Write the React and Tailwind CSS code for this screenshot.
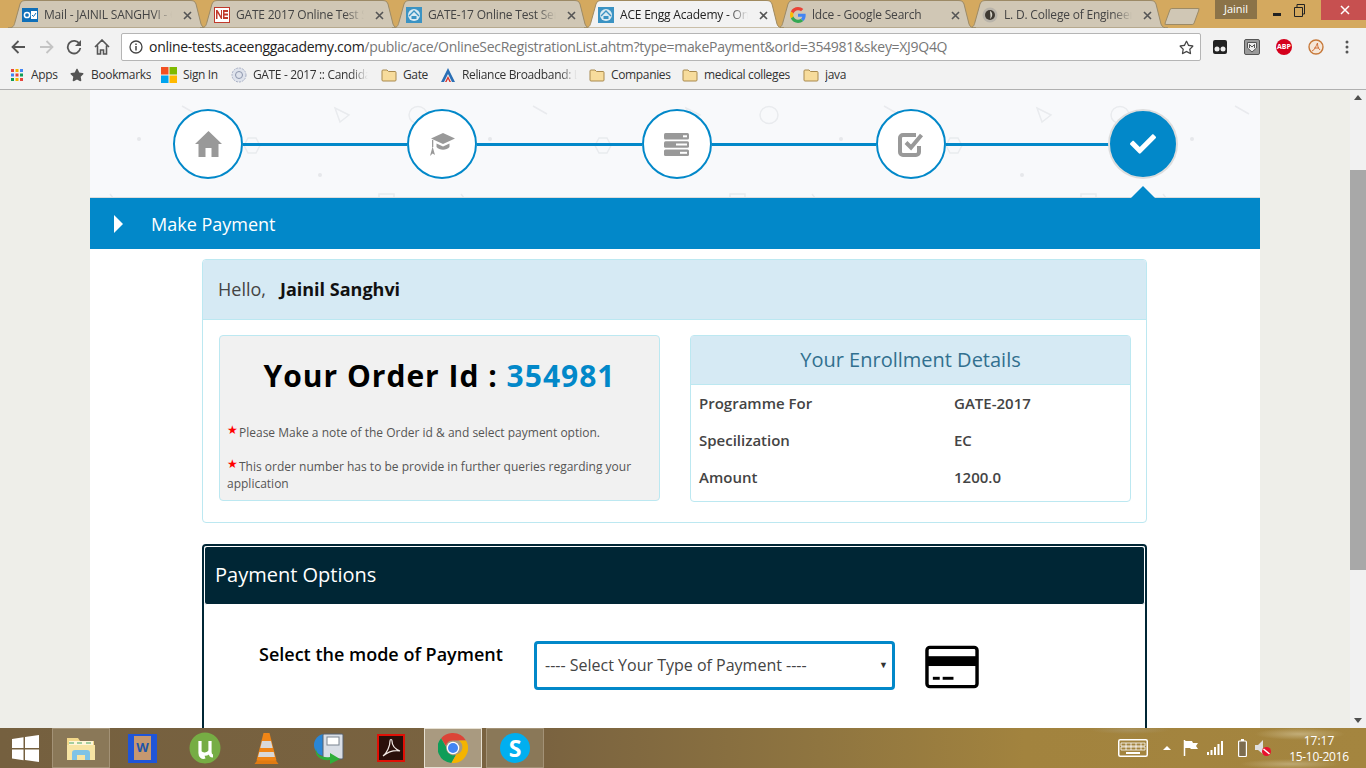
import React from 'react';
import { FaStar, FaRegStar, FaCheck } from 'react-icons/fa';

const OutlookIcon = () => (
  <svg width="16" height="16" viewBox="0 0 16 16"><rect x="0" y="1" width="16" height="14" fill="#0f6fb8" /><rect x="9" y="4" width="6" height="8" fill="#fff" /><path d="M10 8l1.5 1.5L14 6" stroke="#0f6fb8" fill="none" /><circle cx="5" cy="8" r="2.6" fill="none" stroke="#fff" strokeWidth="1.5" /></svg>
);
const NeIcon = () => (
  <svg width="16" height="16" viewBox="0 0 16 16"><rect x="0.5" y="0.5" width="15" height="15" fill="#fff" stroke="#c0392b" /><path d="M2 12V3h1.5L7 9V3h1v9H7L3.5 6v6z" fill="#c0392b" /><path d="M9 3h5v2H10.5v1.5H14v2h-3.5V10H14v2H9z" fill="#c0392b" /></svg>
);
const AceIcon = ({ s = 16 }) => (
  <svg width={s} height={s} viewBox="0 0 16 16"><rect width="16" height="16" fill="#3b93c3" /><circle cx="8" cy="8" r="6" fill="#dbeaf2" /><path d="M3 9l5-5 5 5" fill="none" stroke="#3b93c3" strokeWidth="1.4" /><rect x="5.5" y="9" width="5" height="3" fill="#3b93c3" /></svg>
);
const GoogleIcon = () => (
  <svg width="16" height="16" viewBox="0 0 48 48"><path fill="#EA4335" d="M24 9.5c3.5 0 6.6 1.2 9.1 3.6l6.8-6.8C35.8 2.4 30.4 0 24 0 14.6 0 6.5 5.4 2.6 13.2l7.9 6.1C12.400 13.600 17.700 9.500 24 9.500z" /><path fill="#4285F4" d="M47 24.500c0-1.600-.1-3.100-.4-4.500H24v9h13c-.6 3-2.300 5.500-4.800 7.200l7.700 6c4.500-4.200 7.100-10.300 7.100-17.700z" /><path fill="#FBBC05" d="M10.500 28.700c-.5-1.500-.8-3-.8-4.700s.3-3.200.8-4.700l-7.900-6.100C.9 16.500 0 20.100 0 24s.9 7.500 2.600 10.800z" /><path fill="#34A853" d="M24 48c6.500 0 11.900-2.100 15.900-5.800l-7.700-6c-2.200 1.500-4.900 2.300-8.200 2.300-6.300 0-11.600-4.100-13.500-9.800l-7.900 6.100C6.500 42.600 14.600 48 24 48z" /></svg>
);
const LdIcon = () => (
  <svg width="16" height="16" viewBox="0 0 16 16"><circle cx="8" cy="8" r="7.500" fill="#b9b4aa" /><circle cx="8" cy="8" r="5" fill="#3f3a33" /><path d="M8 4c3 1 3 6 0 8 1-3 0-5 0-8z" fill="#d8d4c8" /></svg>
);
const Folder = () => (
  <svg width="16" height="14" viewBox="0 0 16 14"><path d="M1 3a1 1 0 0 1 1-1h4l1.500 1.500H14a1 1 0 0 1 1 1V12a1 1 0 0 1-1 1H2a1 1 0 0 1-1-1z" fill="#f7dc9c" stroke="#a98a4e" /></svg>
);

const Tab = ({ icon, title, active, z }) => (
  <div className={`relative flex h-[28px] w-[200px] shrink-0 items-center pl-[14px] pt-[2px] ${z} ${active ? 'text-[#222]' : 'text-[#444]'} -mr-[8px]`}>
    <svg className="absolute inset-0" width="200" height="28" viewBox="0 0 200 28">
      <path d="M0 28C5 28 6 26 7 22L12 4C13 1 15 0.500 18 0.500H182C185 0.500 187 1 188 4L193 24C194 27 196 28 200 28Z" fill={active ? '#f2f2f2' : '#d0c7b5'} stroke={active ? '#a08a5f' : '#9c8a66'} strokeWidth="1" />
    </svg>
    <span className="relative w-[16px] shrink-0">{icon}</span>
    <span className="relative ml-[6px] w-[128px] overflow-hidden whitespace-nowrap text-[12px] leading-[16px] tracking-[-0.2px] [mask-image:linear-gradient(to_right,black_85%,transparent)]">{title}</span>
    <svg className="relative ml-[11px]" width="9" height="9" viewBox="0 0 9 9"><path d="M1 1l7 7M8 1l-7 7" stroke="#555" strokeWidth="1.600" /></svg>
  </div>
);

const Bookmark = ({ icon, label, w, fade }) => (
  <div className="flex h-[28px] shrink-0 items-center" style={{ width: w }}>
    <span className="flex w-[16px] shrink-0 justify-center">{icon}</span>
    <span className={`ml-[6px] overflow-hidden whitespace-nowrap text-[12px] leading-[16px] tracking-[-0.35px] text-[#333] ${fade ? 'w-[115px] [mask-image:linear-gradient(to_right,black_85%,transparent)]' : ''}`}>{label}</span>
  </div>
);

const Step = ({ children, last }) => (
  <div className={`relative z-10 flex shrink-0 items-center justify-center rounded-full border-2 ${last ? 'h-[66px] w-[66px] border-[#0288c9] bg-[#0288c9] text-white shadow-[0_0_0_2px_#dddddd]' : 'h-[70px] w-[70px] border-[#0288c9] bg-white text-[#999999]'}`}>
    {children}
    {last && <div className="absolute left-[19px] top-[73px] h-0 w-0 border-x-[12px] border-b-[12px] border-x-transparent border-b-[#0288c9]" />}
  </div>
);
const Line = () => <div className="h-[3px] flex-1 bg-[#0288c9]" />;

const HeroPattern = () => (
  <svg className="absolute inset-0" width="1170" height="107">
    <defs>
      <pattern id="tile" width="351" height="108" patternUnits="userSpaceOnUse">
        <g fill="none" stroke="#e9ebee" strokeWidth="1.500">
          <path d="M92 16l14 8" />
          <path d="M245 18l14 7-9 7z" />
          <ellipse cx="328" cy="25" rx="9" ry="8.500" />
          <path d="M158 48h8l4 7.500-4 7.500h-8l-4-7.500z" />
          <path d="M20 104l3 4" />
          <rect x="289" y="104" width="15" height="8" />
        </g>
        <circle cx="49" cy="49" r="2" fill="#e6e8eb" />
        <circle cx="230" cy="85" r="2" fill="#e6e8eb" />
      </pattern>
    </defs>
    <rect width="1170" height="107" fill="url(#tile)" />
  </svg>
);

const HomeIcon = () => (
  <svg width="27" height="26" viewBox="0 0 27 26" fill="#999999"><path d="M13.500 0L27 13h-3.500v13h-7V17h-6v9h-7V13H0z" /></svg>
);
const CapIcon = () => (
  <svg width="26" height="23" viewBox="0 0 26 23" fill="#999999">
    <path d="M14 0l12 5.500L14 11 2 5.500z" />
    <path d="M7.500 10.500L14 13.500l6.500-3V14c-3 3.500-10 3.500-13 0z" />
    <path d="M3 7h1.300v7H3z" />
    <path d="M3.600 13.500L6 22l-2.400-1.500L1 23z" />
  </svg>
);
const ServerIcon = () => (
  <svg width="25" height="23" viewBox="0 0 25 23">
    <rect width="25" height="6.500" y="0" rx="1.500" fill="#999999" />
    <rect width="25" height="6.500" y="8.200" rx="1.500" fill="#999999" />
    <rect width="25" height="6.500" y="16.500" rx="1.500" fill="#999999" />
    <rect x="19" y="2.300" width="4" height="2" fill="#fff" />
    <rect x="12" y="10.500" width="11" height="2" fill="#fff" />
    <rect x="16" y="18.800" width="7" height="2" fill="#fff" />
  </svg>
);
const CheckIcon = () => (
  <svg width="26" height="25" viewBox="0 0 26 25" fill="none" stroke="#999999">
    <path d="M21 14v6a3 3 0 0 1-3 3H5a3 3 0 0 1-3-3V6a3 3 0 0 1 3-3h13" strokeWidth="4" />
    <path d="M8 10.500l5 5L23.500 3" strokeWidth="4" />
  </svg>
);

const DetailRow = ({ k, v }) => (
  <div className="flex h-[37px] items-center text-[15px] font-semibold text-[#444]">
    <span className="w-[255px]">{k}</span>
    <span>{v}</span>
  </div>
);

const Star = () => <span className="relative -top-[3px] mr-[1px] text-[12px] leading-none text-[#ff0000]">★</span>;

const TaskBtn = ({ children, className }) => (
  <div className={`flex h-[40px] shrink-0 items-center justify-center ${className}`}>{children}</div>
);

export default function App() {
  return (
    <div className="flex h-[768px] w-[1366px] flex-col overflow-hidden font-['Open_Sans',sans-serif]">
      {/* tab strip */}
      <div className="relative flex h-[28px] shrink-0 bg-[#d4a95f] pl-[8px]">
        <Tab z="z-[1]" icon={<OutlookIcon />} title="Mail - JAINIL SANGHVI - Outlook" />
        <Tab z="z-[2]" icon={<NeIcon />} title="GATE 2017 Online Test Series" />
        <Tab z="z-[3]" icon={<AceIcon />} title="GATE-17 Online Test Series" />
        <Tab z="z-[6]" active icon={<AceIcon />} title="ACE Engg Academy - Online" />
        <Tab z="z-[4]" icon={<GoogleIcon />} title="ldce - Google Search" />
        <Tab z="z-[3]" icon={<LdIcon />} title="L. D. College of Engineering" />
        <div className="ml-[7px] mt-[8px] h-[17px] w-[30px] shrink-0 -skew-x-[20deg] rounded-[2px] border border-[#9c8a66] bg-[#d0c7b5]" />
        <div className="ml-[18px] flex h-[19px] w-[42px] shrink-0 items-center justify-center bg-[#8b7348] text-[11px] text-white">Jainil</div>
        <div className="ml-[16px] flex h-[20px] w-[48px] shrink-0 items-start">
          <div className="mt-[13px] h-[3px] w-[8px] bg-[#222]" />
          <svg className="ml-[13px] mt-[4px]" width="11" height="13" viewBox="0 0 11 13"><path d="M0.500 3.500h8v9h-8zM3 3V0.500h7.500V10H9" fill="none" stroke="#222" /></svg>
        </div>
        <div className="flex h-[20px] w-[48px] shrink-0 items-center justify-center bg-[#c75050]">
          <svg width="10" height="10" viewBox="0 0 10 10"><path d="M1 1l8 8M9 1l-8 8" stroke="#fff" strokeWidth="1.500" /></svg>
        </div>
      </div>

      {/* toolbar */}
      <div className="flex h-[33px] shrink-0 items-center bg-[#f2f2f2] pt-[5px]">
        <div className="flex w-[121px] shrink-0 items-center pl-[11px]">
          <svg width="15" height="14" viewBox="0 0 15 14"><path d="M14 7H2M7.500 1L1.500 7l6 6" fill="none" stroke="#555" strokeWidth="1.800" /></svg>
          <svg className="ml-[13px]" width="15" height="14" viewBox="0 0 15 14"><path d="M1 7h12M7.500 1l6 6-6 6" fill="none" stroke="#c4c4c4" strokeWidth="1.800" /></svg>
          <svg className="ml-[12px]" width="16" height="16" viewBox="0 0 16 16"><path d="M13.500 5A6.300 6.300 0 1 0 14.300 9" fill="none" stroke="#555" strokeWidth="1.800" /><path d="M15 1v6H9z" fill="#555" /></svg>
          <svg className="ml-[12px]" width="16" height="16" viewBox="0 0 16 16"><path d="M1 8l7-7 7 7M3.500 6.500V15h3v-4h3v4h3V6.500" fill="none" stroke="#555" strokeWidth="1.600" /></svg>
        </div>
        <div className="flex h-[28px] w-[1080px] shrink-0 items-center rounded-[2px] border border-[#b5b5b5] bg-white">
          <svg className="ml-[7px]" width="14" height="14" viewBox="0 0 14 14"><circle cx="7" cy="7" r="6" fill="none" stroke="#444" strokeWidth="1.300" /><path d="M7 6v4.500M7 3.500v1.500" stroke="#444" strokeWidth="1.500" /></svg>
          <span className="ml-[6px] whitespace-nowrap pb-[2px] text-[14px] tracking-[-0.29px] text-[#222]">online-tests.aceenggacademy.com<span className="text-[#777]">/public/ace/OnlineSecRegistrationList.ahtm?type=makePayment&amp;orId=354981&amp;skey=XJ9Q4Q</span></span>
          <FaRegStar className="ml-auto mr-[6px] text-[15px] text-[#444]" />
        </div>
        <div className="flex flex-1 items-center pl-[11px]">
          <svg width="16" height="16" viewBox="0 0 16 16"><path d="M3 1h10a2 2 0 0 1 2 2v10a2 2 0 0 1-2 2H3a2 2 0 0 1-2-2V3a2 2 0 0 1 2-2z" fill="#222" /><circle cx="5" cy="10" r="2.500" fill="#eee" /><circle cx="11" cy="10" r="2.500" fill="#eee" /></svg>
          <svg className="ml-[16px]" width="16" height="16" viewBox="0 0 16 16"><rect x="0.500" y="0.500" width="15" height="15" rx="1.500" fill="#9a9a9a" stroke="#555" /><path d="M3.500 3.500h9V9L8 13 3.500 9z" fill="#eee" stroke="#555" /><path d="M5.500 9V5.500L8 8l2.500-2.500V9" fill="none" stroke="#555" /></svg>
          <div className="ml-[16px] flex h-[16px] w-[16px] items-center justify-center rounded-full bg-[#d5001c] text-[7px] font-bold text-white">ABP</div>
          <svg className="ml-[16px]" width="16" height="16" viewBox="0 0 16 16"><circle cx="8" cy="8" r="7" fill="#f6e7d8" stroke="#c7793a" strokeWidth="1.400" /><path d="M4 12c3-1 4-5 5.500-8M9.500 4c0 3 .5 5 2.500 7M6 9h5" fill="none" stroke="#d0713a" /></svg>
          <svg className="ml-[21px]" width="4" height="16" viewBox="0 0 4 16"><circle cx="2" cy="3" r="1.500" fill="#555" /><circle cx="2" cy="8" r="1.500" fill="#555" /><circle cx="2" cy="13" r="1.500" fill="#555" /></svg>
        </div>
      </div>

      {/* bookmarks */}
      <div className="flex h-[29px] shrink-0 items-center border-b border-[#b0b0b0] bg-[#f2f2f2] pl-[9px]">
        <Bookmark w={60} label="Apps" icon={<svg width="12" height="12" viewBox="0 0 12 12">{[['#e8453c', 0, 0], ['#f4b400', 4.500, 0], ['#4285f4', 9, 0], ['#4285f4', 0, 4.500], ['#e8453c', 4.500, 4.500], ['#0f9d58', 9, 4.500], ['#0f9d58', 0, 9], ['#f4b400', 4.500, 9], ['#e8453c', 9, 9]].map(([c, x, y]) => <rect key={`${x}-${y}`} x={x} y={y} width="3" height="3" fill={c} />)}</svg>} />
        <Bookmark w={92} label="Bookmarks" icon={<FaStar className="text-[14px] text-[#555]" />} />
        <Bookmark w={70} label="Sign In" icon={<svg width="16" height="16" viewBox="0 0 16 16"><rect width="7.500" height="7.500" fill="#f25022" /><rect x="8.500" width="7.500" height="7.500" fill="#7fba00" /><rect y="8.500" width="7.500" height="7.500" fill="#00a4ef" /><rect x="8.500" y="8.500" width="7.500" height="7.500" fill="#ffb900" /></svg>} />
        <Bookmark w={150} fade label="GATE - 2017 :: Candidate Login" icon={<svg width="16" height="16" viewBox="0 0 16 16"><circle cx="8" cy="8" r="7" fill="#dfe3ec" stroke="#a7afc4" strokeDasharray="2 1" /><circle cx="8" cy="8" r="3.500" fill="none" stroke="#8d96ad" /></svg>} />
        <Bookmark w={59} label="Gate" icon={<Folder />} />
        <Bookmark w={149} fade label="Reliance Broadband: Login" icon={<svg width="16" height="16" viewBox="0 0 16 16"><path d="M1 15L8 1l7 14h-3L8 7l-4 8z" fill="#2a6fb5" /><path d="M5 15l3-6 3 6H9.500L8 12l-1.500 3z" fill="#d8322b" /></svg>} />
        <Bookmark w={93} label="Companies" icon={<Folder />} />
        <Bookmark w={121} label="medical colleges" icon={<Folder />} />
        <Bookmark w={60} label="java" icon={<Folder />} />
      </div>

      {/* page */}
      <div className="flex min-h-0 flex-1">
        <div className="flex min-w-0 w-[1350px] justify-center bg-[#eeeee9]">
          <main className="w-[1170px] overflow-hidden bg-white">
            <div className="relative flex h-[108px] items-start border-b border-[#dddddd] bg-[#f8f9fb] pl-[83px] pr-[84px] pt-[19px]">
              <HeroPattern />
              <div className="relative flex w-full items-center">
                <Step><HomeIcon /></Step><Line />
                <Step><CapIcon /></Step><Line />
                <Step><ServerIcon /></Step><Line />
                <Step><CheckIcon /></Step><Line />
                <Step last><FaCheck className="text-[26px]" /></Step>
              </div>
            </div>
            <div className="relative flex h-[51px] items-center bg-[#0288c9] pl-[24px] text-[18px] text-white">
              <svg width="10" height="18" viewBox="0 0 10 18"><path d="M0 0l9 9-9 9z" fill="#fff" /></svg>
              <span className="ml-[27px] pt-[2px]">Make Payment</span>
            </div>

            <div className="ml-[112px] mt-[10px] h-[264px] w-[945px] rounded-[4px] border border-[#bce8f1]">
              <div className="flex h-[60px] items-center rounded-t-[3px] border-b border-[#bce8f1] bg-[#d6eaf4] pl-[15px] text-[18px] text-[#444]">
                Hello,<span className="ml-[14px] font-bold text-[#111]">Jainil Sanghvi</span>
              </div>
              <div className="flex gap-[30px] pl-[16px] pt-[15px]">
                <div className="h-[166px] w-[441px] shrink-0 rounded-[4px] border border-[#bce8f1] bg-[#f1f1f1] px-[7px]">
                  <div className="mt-[18px] text-center text-[30px] font-bold leading-[44px] tracking-[1px] text-black">Your Order Id : <span className="text-[#0288c9]">354981</span></div>
                  <p className="mt-[26px] text-[12px] leading-[17px] text-[#555]"><Star />Please Make a note of the Order id &amp; and select payment option.</p>
                  <p className="mt-[17px] text-[12px] leading-[17px] text-[#555]"><Star />This order number has to be provide in further queries regarding your application</p>
                </div>
                <div className="h-[167px] w-[441px] shrink-0 rounded-[4px] border border-[#bce8f1]">
                  <div className="flex h-[49px] items-center justify-center border-b border-[#bce8f1] bg-[#d6eaf4] text-[20px] text-[#31708f]">Your Enrollment Details</div>
                  <div className="px-[8px]">
                    <DetailRow k="Programme For" v="GATE-2017" />
                    <DetailRow k="Specilization" v="EC" />
                    <DetailRow k="Amount" v="1200.0" />
                  </div>
                </div>
              </div>
            </div>

            <div className="ml-[112px] mt-[21px] h-[300px] w-[945px] rounded-[4px] border-2 border-[#002635]">
              <div className="flex h-[59px] items-center rounded-[3px] border border-white bg-[#002635] pb-[2px] pl-[10px] text-[20px] text-white">Payment Options</div>
              <div className="flex pl-[55px] pt-[36px]">
                <div className="w-[275px] text-[18px] font-semibold leading-[26px] text-black">Select the mode of Payment</div>
                <div className="flex h-[49px] w-[361px] items-center justify-between rounded-[4px] border-[3px] border-[#0288c9] bg-white pb-[1px] pl-[8px] pr-[4px] text-[16px] text-[#444]">
                  <span>---- Select Your Type of Payment ----</span>
                  <span className="text-[9px] text-[#333]">▼</span>
                </div>
                <svg className="ml-[30px] mt-[4px]" width="54" height="44" viewBox="0 0 55 44"><rect x="2" y="2" width="51" height="40" rx="3" fill="#fff" stroke="#000" strokeWidth="3.500" /><rect x="2" y="11" width="51" height="10" fill="#000" /><rect x="8" y="32" width="7" height="3" fill="#000" /><rect x="18" y="32" width="11" height="3" fill="#000" /></svg>
              </div>
            </div>
          </main>
        </div>
        <div className="relative flex w-[16px] flex-col items-center justify-between bg-[#f1f1f1] py-[5px]">
          <div className="h-0 w-0 border-x-[4px] border-b-[5px] border-x-transparent border-b-[#505050]" />
          <div className="absolute left-0 top-[80px] h-[400px] w-[16px] bg-[#a8a8a8]" />
          <div className="h-0 w-0 border-x-[4px] border-t-[5px] border-x-transparent border-t-[#505050]" />
        </div>
      </div>

      {/* taskbar */}
      <div className="flex h-[40px] shrink-0 items-center bg-[radial-gradient(ellipse_45px_6px_at_1300px_6px,#c2ad78,transparent),radial-gradient(ellipse_50px_5px_at_1290px_36px,#bda873,transparent),radial-gradient(ellipse_40px_4px_at_1130px_2px,#a8915c,transparent),linear-gradient(90deg,#75603f_0%,#7a6340_40%,#8f7540_60%,#a2833e_75%,#a4853f_100%)] text-white">
        <svg className="ml-[12px]" width="27" height="27" viewBox="0 0 27 27"><path d="M0 4l11.500-1.700V13H0zM13 2.100L27 0v13H13zM0 14.500h11.500v10.700L0 23.500zM13 14.500h14V27l-14-2z" fill="#fff" /></svg>
        <TaskBtn className="ml-[13px] w-[58px] border border-[#a39276] bg-[#8a7858]">
          <svg width="32" height="32" viewBox="0 0 32 32"><path d="M2 6h11l2 3h14v19H2z" fill="#f3d88a" /><path d="M4 9h24v5H4z" fill="#fff6d8" /><path d="M4 11h5M12 11h5M21 11h5" stroke="#4aa564" /><path d="M2 13h28v15H2z" fill="#f7e4a3" /><path d="M7 28v-7a3 3 0 0 1 3-3h12a3 3 0 0 1 3 3v7h-5v-5h-8v5z" fill="#7ec3e6" /></svg>
        </TaskBtn>
        <TaskBtn className="ml-[18px] w-[29px]">
          <div className="flex h-[29px] w-[29px] items-center justify-center bg-[#1f55d8]"><div className="flex h-[24px] w-[17px] items-center justify-center bg-[#c59870] text-[13px] font-bold text-[#1f55a8]">W</div></div>
        </TaskBtn>
        <TaskBtn className="ml-[32px] w-[32px]">
          <svg width="32" height="32" viewBox="0 0 32 32"><circle cx="16" cy="16" r="15.500" fill="#76ad44" /><path d="M11 9v12c0 3 2 5 5 4M21 9v11c0 3 1 4 3 4M11 20c2 3 8 3 10-1" fill="none" stroke="#fff" strokeWidth="3.200" /></svg>
        </TaskBtn>
        <TaskBtn className="ml-[33px] w-[25px]">
          <svg width="25" height="31" viewBox="0 0 25 31"><path d="M0.500 31l3-4h18l3 4z" fill="#e07b12" /><path d="M9.500 0h6l7 27.500H2.500z" fill="#f08516" /><path d="M8 8h9l1.700 7H6.300zM5.300 19h14.400l1.200 5H4z" fill="#d9d9d9" /></svg>
        </TaskBtn>
        <TaskBtn className="ml-[35px] w-[30px]">
          <svg width="30" height="32" viewBox="0 0 30 32"><circle cx="11" cy="13" r="11" fill="#2a86d6" /><rect x="9" y="2" width="20" height="25" rx="1" fill="#d9dee6" stroke="#56606e" /><rect x="13" y="5" width="12" height="8" fill="#fff" stroke="#7a838f" /><path d="M2 16c0 7 6 10 14 9v-4l10 6-10 5v-4C8 29 0 25 2 16z" fill="#2fae3a" /></svg>
        </TaskBtn>
        <TaskBtn className="ml-[33px] w-[28px]">
          <svg width="28" height="28" viewBox="0 0 28 28"><rect x="1" y="1" width="26" height="26" fill="#2a0f0a" stroke="#e01006" strokeWidth="2" /><path d="M6 22c4-3 7-10 7-15 0-2 2-2 2 0 0 5 3 8 8 10-6-1-12 1-17 5z" fill="none" stroke="#f3e9e4" strokeWidth="1.200" /></svg>
        </TaskBtn>
        <TaskBtn className="ml-[19px] w-[58px] border border-[#e6e0d2] bg-[#a99a80]">
          <svg width="30" height="30" viewBox="0 0 48 48"><path fill="#db4437" d="M24 0a24 24 0 0 1 20.800 12H24a12 12 0 0 0-11.500 8.500L5 8.400A24 24 0 0 1 24 0z" /><path fill="#0f9d58" d="M5 8.400l8 14a12 12 0 0 0 15.500 12.700L21.500 47.900A24 24 0 0 1 5 8.400z" /><path fill="#f4b400" d="M44.800 12A24 24 0 0 1 21.500 47.900l8-13.800A12 12 0 0 0 33 12z" /><circle cx="24" cy="24" r="10" fill="#fff" /><circle cx="24" cy="24" r="8" fill="#4285f4" /></svg>
        </TaskBtn>
        <TaskBtn className="ml-[4px] w-[58px] border border-[#a39276] bg-[#8a7858]">
          <div className="flex h-[30px] w-[30px] items-center justify-center rounded-full bg-[#00aff0] text-[23px] font-bold text-white">S</div>
        </TaskBtn>
        <svg className="ml-[574px]" width="30" height="18" viewBox="0 0 30 18"><rect x="0.750" y="0.750" width="28.500" height="16.500" rx="1.500" fill="none" stroke="#fff" strokeWidth="1.500" /><path d="M3 4h24v3H3zM3 8h24v3H3z" fill="none" stroke="#fff" strokeWidth="0.800" /><path d="M8 4v7M13 4v7M18 4v7M23 4v7" stroke="#fff" strokeWidth="0.800" /><path d="M8 14h14" stroke="#fff" strokeWidth="2" /></svg>
        <div className="ml-[15px] h-0 w-0 border-x-[4px] border-b-[4px] border-x-transparent border-b-white" />
        <svg className="ml-[12px]" width="16" height="16" viewBox="0 0 16 16"><path d="M1.500 0v16" stroke="#fff" strokeWidth="1.500" /><path d="M2 1h7l1 2h5l-2 3 2 3H8L7 8H2z" fill="#fff" /></svg>
        <svg className="ml-[8px]" width="16" height="14" viewBox="0 0 16 14"><path d="M0 11h2v3H0zM3.500 9h2v5h-2zM7 6h2v8H7zM10.500 3h2v11h-2zM14 0h2v14h-2z" fill="#fff" /></svg>
        <svg className="ml-[15px]" width="9" height="18" viewBox="0 0 9 18"><rect x="0.600" y="2" width="7.800" height="15.500" rx="1" fill="#7c6c4e" stroke="#fff" strokeWidth="1.200" /><rect x="3" y="0" width="3" height="2" fill="#fff" /></svg>
        <svg className="ml-[8px]" width="16" height="17" viewBox="0 0 16 17"><path d="M0 5h3l5-5v14L3 10H0z" fill="#dfdfdf" /><circle cx="11.500" cy="11.500" r="4.500" fill="#e8112d" /><path d="M8.500 9l6 5" stroke="#fff" strokeWidth="1.500" /></svg>
        <div className="ml-[16px] w-[64px] pt-[1px] text-center text-[12px] leading-[16px]">
          <div>17:17</div>
          <div className="tracking-[-0.3px]">15-10-2016</div>
        </div>
      </div>
    </div>
  );
}
